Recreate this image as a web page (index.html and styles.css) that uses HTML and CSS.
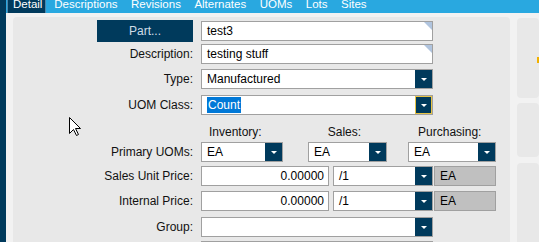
FILE: index.html
```html
<!DOCTYPE html>
<html>
<head>
<meta charset="utf-8">
<link rel="stylesheet" href="styles.css">
</head>
<body>
<div class="app">
  <div class="rail"></div>
  <div class="main">
    <div class="tabs">
      <span class="tab active">Detail</span>
      <span class="tab first">Descriptions</span>
      <span class="tab">Revisions</span>
      <span class="tab">Alternates</span>
      <span class="tab">UOMs</span>
      <span class="tab">Lots</span>
      <span class="tab">Sites</span>
    </div>
    <div class="body">
      <div class="panel">
        <div class="row r1">
          <button class="part-btn">Part...</button>
          <div class="field w232 noted">test3</div>
        </div>
        <div class="row r2">
          <span class="label">Description:</span>
          <div class="field w232 noted">testing stuff</div>
        </div>
        <div class="row r3">
          <span class="label">Type:</span>
          <div class="field combo w232"><span class="val">Manufactured</span><span class="dd"><i></i></span></div>
        </div>
        <div class="row r4">
          <span class="label">UOM Class:</span>
          <div class="field combo w232"><span class="val sel">Count</span><span class="dd focus"><i></i></span></div>
        </div>
        <div class="row r5">
          <span class="label"></span>
          <div class="heads">
            <span class="h-inv">Inventory:</span>
            <span class="h-sales">Sales:</span>
            <span class="h-pur">Purchasing:</span>
          </div>
        </div>
        <div class="row r6">
          <span class="label">Primary UOMs:</span>
          <div class="cells">
            <div class="field combo w-inv"><span class="val">EA</span><span class="dd"><i></i></span></div>
            <div class="field combo w-sales"><span class="val">EA</span><span class="dd"><i></i></span></div>
            <div class="field combo w-pur"><span class="val">EA</span><span class="dd"><i></i></span></div>
          </div>
        </div>
        <div class="row r7">
          <span class="label">Sales Unit Price:</span>
          <div class="cells">
            <div class="field num w-price">0.00000</div>
            <div class="field combo w-per"><span class="val">/1</span><span class="dd"><i></i></span></div>
            <div class="field ro w-ea">EA</div>
          </div>
        </div>
        <div class="row r8">
          <span class="label">Internal Price:</span>
          <div class="cells">
            <div class="field num w-price">0.00000</div>
            <div class="field combo w-per"><span class="val">/1</span><span class="dd"><i></i></span></div>
            <div class="field ro w-ea">EA</div>
          </div>
        </div>
        <div class="row r9">
          <span class="label">Group:</span>
          <div class="field combo w232"><span class="val"></span><span class="dd"><i></i></span></div>
        </div>
        <div class="row r10">
          <span class="label"></span>
          <div class="field w232"></div>
        </div>
      </div>
      <div class="side">
        <div class="sp sp1"><i class="mark"></i></div>
        <div class="sp sp2"></div>
        <div class="sp sp3"></div>
      </div>
    </div>
  </div>
  <svg class="cursor" width="13" height="20" viewBox="0 0 13 20">
    <path d="M0.5 0.5 L0.5 16.5 L4.5 12.5 L7.5 18.5 L9.5 17.5 L6.5 11.5 L11.5 11.5 Z" fill="#fff" stroke="#000" stroke-width="1" stroke-linejoin="miter"/>
  </svg>
</div>
</body>
</html>
```

FILE: styles.css
```css
* { box-sizing: border-box; }
html, body { margin: 0; padding: 0; }
body {
  width: 539px;
  height: 242px;
  overflow: hidden;
  background: #f2f2f2;
  font-family: "Liberation Sans", Arial, sans-serif;
  font-size: 12px;
  color: #111;
}
.app {
  position: relative;
  display: flex;
  width: 539px;
  height: 242px;
  overflow: hidden;
}
.rail {
  width: 6px;
  flex: none;
  background: #003a5c;
}
.main {
  width: 533px;
  flex: none;
  display: flex;
  flex-direction: column;
}
.tabs {
  height: 13px;
  flex: none;
  display: flex;
  background: #29a8e0;
  overflow: hidden;
  white-space: nowrap;
}
.tab {
  height: 13px;
  line-height: 8px;
  font-size: 11.5px;
  color: #fff;
  padding: 0 6.75px;
}
.tab.active {
  margin-left: 1px;
  width: 39px;
  padding: 0 0 0 5px;
  background: #003a5c;
  border-left: 1px solid #4c86aa;
  border-right: 1px solid #4c86aa;
}
.tab.first { margin-left: 1.5px; }
.body {
  flex: 1;
  display: flex;
  padding: 4px 0 0 7px;
  gap: 7px;
  min-height: 0;
}
.panel {
  width: 497px;
  flex: none;
  background: #e8e8e8;
  border-radius: 4px 4px 0 0;
  padding-top: 3px;
  display: flex;
  flex-direction: column;
}
.side {
  width: 22px;
  flex: none;
  display: flex;
  flex-direction: column;
  padding-top: 1px;
}
.sp {
  background: #e8e8e8;
  border-radius: 4px;
}
.sp1 {
  height: 80px;
  display: flex;
  justify-content: flex-end;
  align-items: flex-start;
  padding-top: 39px;
}
.sp2 { height: 54px; margin-top: 5px; }
.sp3 { flex: 1; margin-top: 6px; border-radius: 4px 4px 0 0; }
.mark {
  display: block;
  width: 2px;
  height: 6px;
  background: #f0b000;
}
.row {
  display: grid;
  grid-template-columns: 180px auto;
  column-gap: 8px;
  align-items: center;
  justify-items: start;
  flex: none;
}
.label {
  justify-self: end;
  white-space: nowrap;
}
.r1 { height: 22px; }
.r2 { margin-top: 2px; }
.r3 { margin-top: 5px; }
.r4 { margin-top: 6px; }
.r5 { margin-top: 10px; height: 14px; }
.r6 { margin-top: 3px; }
.r7 { margin-top: 4px; }
.r8 { margin-top: 5px; }
.r9 { margin-top: 6px; }
.r10 { margin-top: 4px; }
.part-btn {
  justify-self: end;
  width: 96px;
  height: 22px;
  border: none;
  background: #003a5c;
  color: #cfdde7;
  font-family: inherit;
  font-size: 12px;
  padding: 0;
}
.field {
  position: relative;
  height: 20px;
  border: 1px solid #a0a0a0;
  background: #fff;
  display: flex;
  align-items: center;
  padding-left: 5px;
  white-space: nowrap;
  color: #000;
}
.w232 { width: 232px; }
.noted::after {
  content: "";
  position: absolute;
  top: 0;
  right: 0;
  width: 8px;
  height: 8px;
  background: #b0c4de;
  clip-path: polygon(0 0, 100% 0, 100% 100%);
}
.combo { padding-right: 0; }
.combo .val { flex: 1; }
.val.sel {
  flex: none;
  background: #0078d7;
  color: #fff;
  padding: 1px;
}
.combo .val.sel + .dd { margin-left: auto; }
.dd {
  width: 17px;
  height: 18px;
  flex: none;
  background: #003a5c;
  display: flex;
  align-items: center;
  justify-content: center;
}
.dd i {
  display: block;
  width: 0;
  height: 0;
  border-left: 3px solid transparent;
  border-right: 3px solid transparent;
  border-top: 3px solid #fff;
  margin-top: 1px;
}
.dd.focus { border: 1px solid #e8c445; }
.heads {
  display: flex;
  white-space: nowrap;
}
.h-inv { margin-left: 8px; }
.h-sales { margin-left: 66px; }
.h-pur { margin-left: 57px; }
.cells { display: flex; }
.w-inv { width: 82px; }
.w-sales { width: 79px; margin-left: 25px; }
.w-pur { width: 88px; margin-left: 21px; }
.w-price { width: 128px; }
.num { justify-content: flex-end; padding: 0 4px 0 0; }
.w-per { width: 100px; margin-left: 4px; }
.w-ea { width: 62px; margin-left: 1px; }
.ro { background: #c0c0c0; }
.cursor {
  position: absolute;
  left: 69px;
  top: 117px;
}
```
